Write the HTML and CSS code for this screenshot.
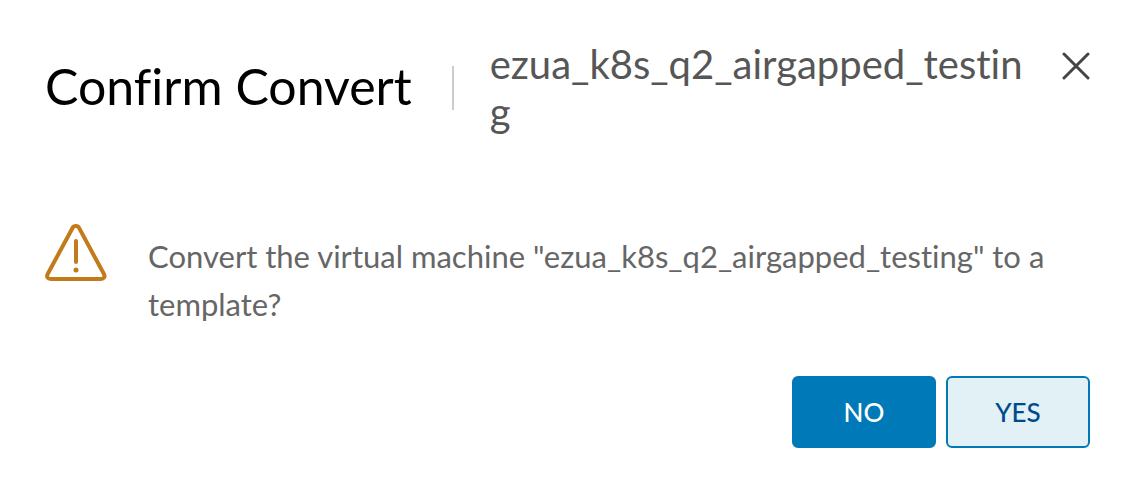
FILE: index.html
```html
<!DOCTYPE html>
<html lang="en">
<head>
<meta charset="utf-8">
<title>Confirm Convert</title>
<meta name="viewport" content="width=device-width, initial-scale=1">
<link rel="stylesheet" href="styles.css">
</head>
<body>
<main class="dialog" role="dialog" aria-labelledby="dialog-title" aria-describedby="dialog-message">
  <header class="dialog-header">
    <h1 class="dialog-title" id="dialog-title">Confirm Convert</h1>
    <p class="dialog-subject">ezua_k8s_q2_airgapped_testing</p>
    <button class="close-button" type="button" aria-label="Close">
      <svg class="close-icon" viewBox="0 0 28 28" aria-hidden="true"><path d="M2 2 26 26M26 2 2 26"/></svg>
    </button>
  </header>
  <section class="dialog-body">
    <svg class="warning-icon" viewBox="0 0 62 58" aria-hidden="true">
      <path d="M27.4 4.2 2.8 49.8C1.1 52.8 2.7 55 5.7 55H55.9C58.9 55 60.5 52.8 58.8 49.8L34.2 4.2C32.8 1.3 28.8 1.3 27.4 4.2Z"/>
      <path d="M31 17V38"/>
      <circle cx="31" cy="46" r="2.5"/>
    </svg>
    <p class="dialog-message" id="dialog-message">Convert the virtual machine "ezua_k8s_q2_airgapped_testing" to a template?</p>
  </section>
  <footer class="dialog-actions">
    <button class="button button-primary" type="button">NO</button>
    <button class="button button-outline" type="button">YES</button>
  </footer>
</main>
</body>
</html>
```
FILE: styles.css
```css
* { box-sizing: border-box; }
body {
  margin: 0;
  background: #fff;
  color: #666;
  font-family: Lato, "Liberation Sans", sans-serif;
  font-variant-ligatures: none;
}
.dialog { padding: 40px 40px 30px 45px; }
.dialog-header { display: flex; align-items: flex-start; }
.dialog-title {
  flex: none;
  margin: 26px 0 0;
  padding: 0 40px 4px 0;
  border-right: 2px solid #ccc;
  color: #000;
  font-size: 50px;
  line-height: 40px;
  font-weight: 400;
}
.dialog-subject {
  flex: 1;
  min-width: 0;
  margin: 0 32px 0 36px;
  color: #565656;
  font-size: 40px;
  line-height: 48px;
  overflow-wrap: anywhere;
}
.close-button {
  flex: none;
  margin-top: 12px;
  padding: 0;
  border: 0;
  background: none;
}
.close-icon {
  display: block;
  width: 28px;
  height: 28px;
  fill: none;
  stroke: #454545;
  stroke-width: 3;
  stroke-linecap: round;
}
.dialog-body {
  display: flex;
  align-items: flex-start;
  gap: 41px;
  margin-top: 88px;
}
.warning-icon {
  flex: none;
  width: 62px;
  height: 58px;
  fill: none;
  stroke: #c27b1a;
  stroke-width: 4;
  stroke-linecap: round;
}
.warning-icon circle { fill: #c27b1a; stroke: none; }
.dialog-message {
  margin: 8px 0 0;
  font-size: 31px;
  line-height: 48px;
}
.dialog-actions {
  display: flex;
  justify-content: flex-end;
  gap: 10px;
  margin-top: 48px;
}
.button {
  width: 144px;
  height: 72px;
  border: 2px solid #0079b8;
  border-radius: 6px;
  font: 500 26px/32px Lato, "Liberation Sans", sans-serif;
}
.button-primary { background: #0079b8; color: #fff; }
.button-outline { background: #e1f1f6; color: #004b8d; }
```
